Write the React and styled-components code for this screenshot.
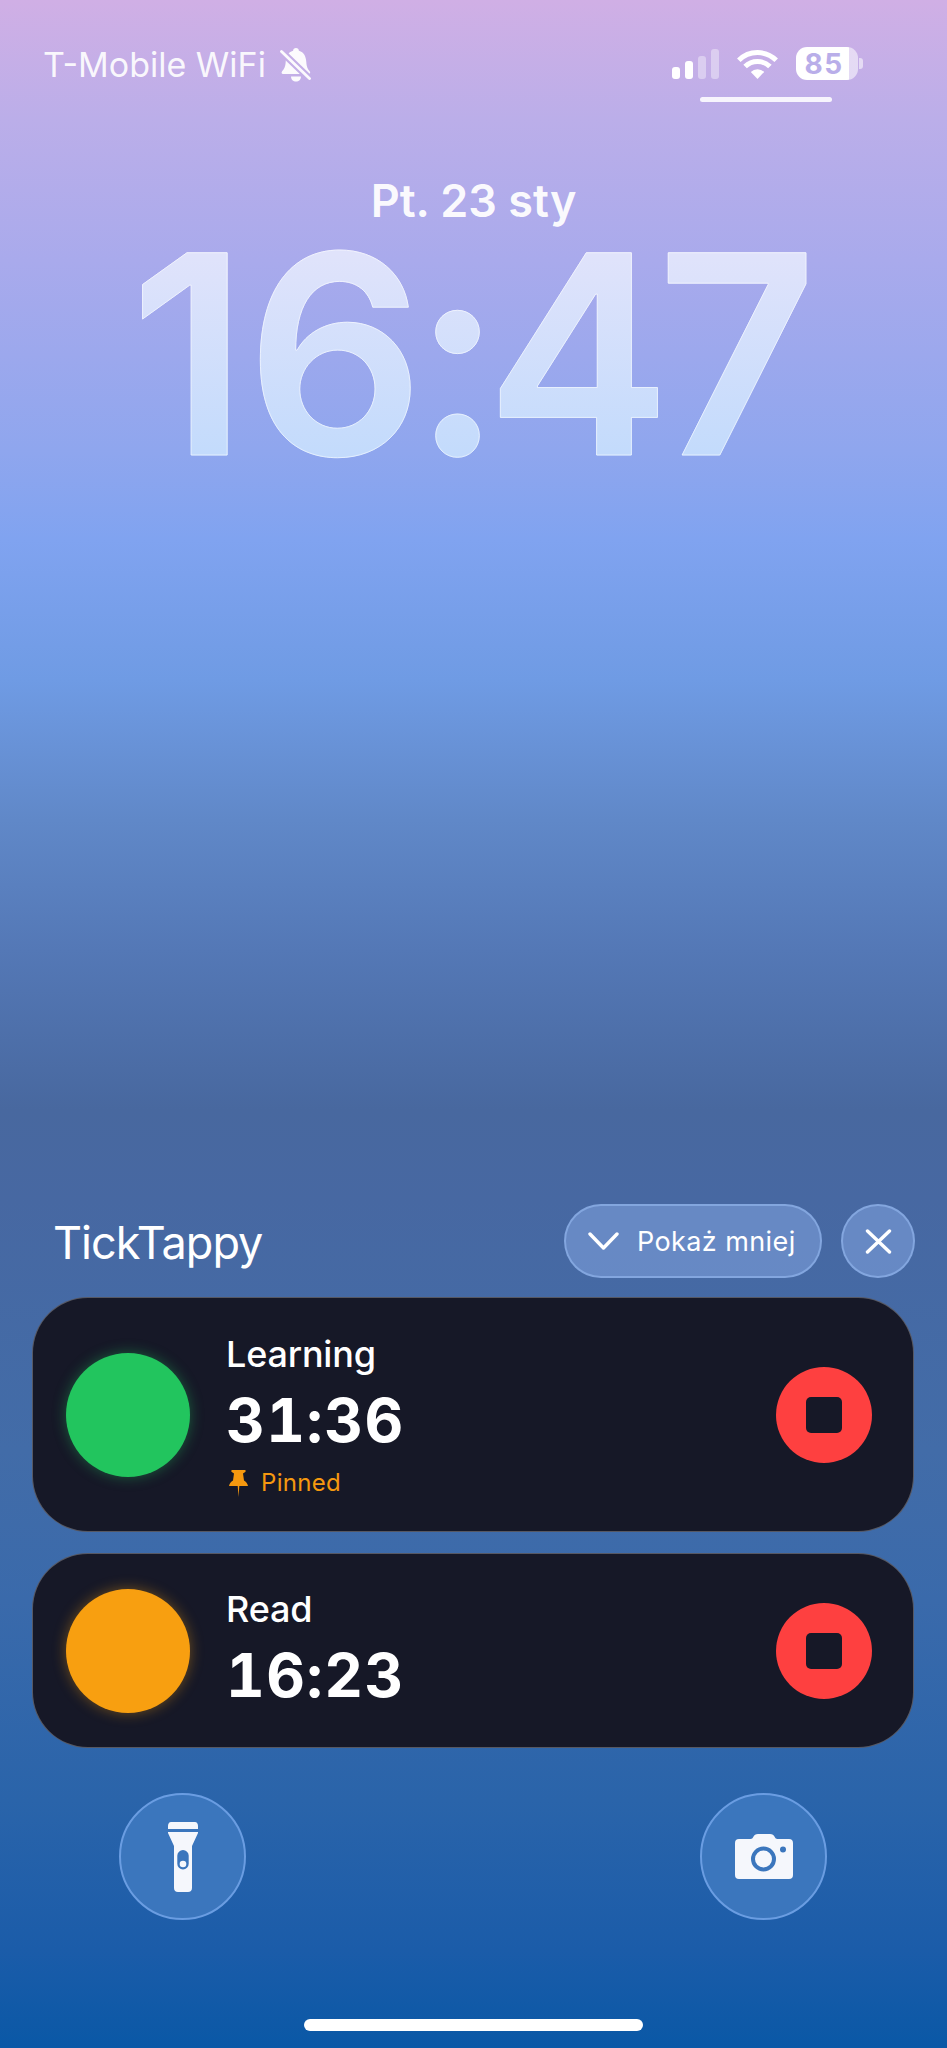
import React from "react";
import styled, { createGlobalStyle } from "styled-components";

const Global = createGlobalStyle`
  html, body { margin: 0; padding: 0; background: #0a58a6; }
  * { box-sizing: border-box; }
`;

const Screen = styled.div`
  width: 947px;
  height: 2048px;
  overflow: hidden;
  display: flex;
  flex-direction: column;
  font-family: Inter, "Liberation Sans", sans-serif;
  color: #fff;
  background: linear-gradient(180deg,
    #d0afe5 0, #bbaee9 120px, #a9aaec 260px, #8fa6ee 450px, #80a3f0 540px,
    #6f9be4 680px, #6088c8 820px, #5478b6 950px, #48689f 1110px, #4768a2 1200px,
    #426ca8 1450px, #3a6aab 1600px, #2a64aa 1800px, #1b5ca9 1950px, #0a58a6 2048px);
`;

const StatusBar = styled.header`
  display: flex;
  justify-content: space-between;
  align-items: flex-start;
  padding: 47px 84px 0 43px;
  height: 102px;
`;
const Carrier = styled.div`
  display: flex;
  align-items: center;
  gap: 14px;
  height: 36px;
  font-size: 34px;
  line-height: 36px;
  color: rgba(255,255,255,.92);
`;
const StatusRight = styled.div`
  display: flex;
  flex-direction: column;
  align-items: flex-end;
  gap: 17px;
`;
const StatusIcons = styled.div`
  display: flex;
  align-items: flex-end;
  gap: 18px;
`;
const Signal = styled.div`
  display: flex;
  align-items: flex-end;
  gap: 5px;
  margin-bottom: 1px;
`;
const Bar = styled.span`
  width: 8px;
  height: ${p => p.$h}px;
  border-radius: 3px;
  background: ${p => p.$on ? "#fff" : "rgba(255,255,255,.38)"};
`;
const Battery = styled.div`
  display: flex;
  align-items: center;
  gap: 1px;
`;
const BatteryBody = styled.div`
  width: 62px;
  height: 33px;
  border-radius: 11px;
  display: flex;
  align-items: center;
  justify-content: center;
  font-size: 28px;
  font-weight: 700;
  letter-spacing: 1.5px;
  padding-right: 6px;
  color: #b9aee9;
  background: linear-gradient(90deg, #fff 0 53px, rgba(255,255,255,.55) 53px);
`;
const BatteryNub = styled.span`
  width: 4px;
  height: 11px;
  border-radius: 0 3px 3px 0;
  background: rgba(255,255,255,.55);
`;
const Underline = styled.div`
  width: 132px;
  height: 5px;
  margin-right: 31px;
  border-radius: 3px;
  background: rgba(255,255,255,.88);
`;

const DateLine = styled.div`
  margin-top: 73px;
  text-align: center;
  font-size: 45px;
  line-height: 52px;
  font-weight: 600;
  color: rgba(255,255,255,.95);
`;
const Clock = styled.div`
  margin-top: 2px;
  height: 250px;
  text-align: center;
  font-size: 278px;
  line-height: 250px;
  font-weight: 600;
  white-space: nowrap;
  color: transparent;
  background: linear-gradient(180deg, #e0e3fb 25px, #c3dbfc 225px);
  -webkit-background-clip: text;
  background-clip: text;
  -webkit-text-stroke: 1px rgba(255,255,255,.55);
`;
const Glyph = styled.span`
  letter-spacing: ${p => p.$ls}px;
`;

const Spacer = styled.div`
  flex: 1;
`;

const Widgets = styled.section`
  padding: 0 33px 0 32px;
  display: flex;
  flex-direction: column;
`;
const WidgetHead = styled.div`
  display: flex;
  align-items: center;
  justify-content: space-between;
  padding: 0 0 0 21px;
  height: 74px;
  margin-bottom: 19px;
`;
const AppName = styled.div`
  font-size: 45px;
  letter-spacing: -1px;
  line-height: 74px;
  padding-top: 3px;
`;
const HeadActions = styled.div`
  display: flex;
  gap: 19px;
  margin-right: -1px;
`;
const Pill = styled.div`
  width: 258px;
  height: 74px;
  border-radius: 37px;
  display: flex;
  align-items: center;
  gap: 18px;
  padding-left: 22px;
  font-size: 27px;
  letter-spacing: .4px;
  background: rgba(135,170,230,.5);
  border: 2px solid rgba(150,185,240,.6);
`;
const CloseBtn = styled.div`
  width: 74px;
  height: 74px;
  border-radius: 50%;
  display: flex;
  align-items: center;
  justify-content: center;
  background: rgba(135,170,230,.5);
  border: 2px solid rgba(150,185,240,.6);
`;
const Card = styled.article`
  height: ${p => p.$h}px;
  margin-bottom: ${p => p.$mb}px;
  background: #161827;
  border-radius: 56px;
  border: 1.5px solid rgba(255,255,255,.28);
  display: flex;
  align-items: center;
  padding: 0 41px 0 33px;
`;
const Dot = styled.div`
  width: 124px;
  height: 124px;
  border-radius: 50%;
  flex: none;
  background: ${p => p.$c};
  box-shadow: 0 0 14px ${p => p.$c}66;
`;
const Info = styled.div`
  margin-left: 36px;
  flex: 1;
  display: flex;
  flex-direction: column;
  padding-top: 2px;
  padding-bottom: ${p => p.$pb || 0}px;
`;
const TaskName = styled.div`
  font-size: 36px;
  line-height: 42px;
  font-weight: 500;
  letter-spacing: -.2px;
`;
const Timer = styled.div`
  margin-top: 13px;
  font-size: 60px;
  line-height: 64px;
  font-weight: 700;
  letter-spacing: 1.5px;
  font-variant-numeric: tabular-nums;
`;
const PinRow = styled.div`
  display: flex;
  align-items: center;
  gap: 13px;
  margin-top: 16px;
  padding-left: 3px;
  font-size: 24px;
  line-height: 30px;
  color: #f5980f;
  letter-spacing: .3px;
`;
const StopBtn = styled.div`
  width: 96px;
  height: 96px;
  border-radius: 50%;
  background: #fe4040;
  display: flex;
  align-items: center;
  justify-content: center;
  flex: none;
`;
const StopSquare = styled.span`
  width: 36px;
  height: 36px;
  border-radius: 5px;
  background: #161827;
`;

const Actions = styled.div`
  display: flex;
  justify-content: space-between;
  padding: 45px 120px 0 119px;
`;
const RoundAction = styled.div`
  width: 127px;
  height: 127px;
  border-radius: 50%;
  display: flex;
  align-items: center;
  justify-content: center;
  background: #3b76bd;
  border: 2px solid #6a9de2;
`;
const HomeBar = styled.div`
  width: 339px;
  height: 12px;
  margin: 99px auto 17px;
  border-radius: 6px;
  background: #fff;
`;

const BellSlash = () => (
  <svg width="32" height="35" viewBox="0 0 32 35" fill="#fff" opacity=".95">
    <mask id="bell-gap" maskUnits="userSpaceOnUse" x="0" y="0" width="32" height="35">
      <rect width="32" height="35" fill="#fff" />
      <path d="M0.500 2.500 30 31" stroke="#000" strokeWidth="7" />
    </mask>
    <g mask="url(#bell-gap)">
      <path d="M16 0c1.700 0 2.800 1.100 2.900 2.700C24 4 26 8.500 26.300 14c.3 5 1.500 7 3.500 9.500.8 1 .3 2.500-1 2.500H3c-1.300 0-1.800-1.500-1-2.500C4 21 5.400 19 5.700 14 6 8.500 8 4 13.100 2.700 13.200 1.100 14.300 0 16 0z" />
      <path d="M11 28.500h10c0 3-2.200 5-5 5s-5-2-5-5z" />
    </g>
    <path d="M1.500 3.500 29.500 30.500" stroke="#fff" strokeWidth="2.800" strokeLinecap="round" />
  </svg>
);
const Wifi = () => (
  <svg width="41" height="31" viewBox="0 0 41 31">
    <path d="M20.500 30 13.800 22.900a9.500 9.500 0 0 1 13.400 0z" fill="#fff" />
    <path d="M8.100 17.600a17.500 17.500 0 0 1 24.800 0M1.800 11.300a26.500 26.500 0 0 1 37.400 0" fill="none" stroke="#fff" strokeWidth="5" />
  </svg>
);
const Chevron = () => (
  <svg width="31" height="18" viewBox="0 0 31 18" fill="none" stroke="#fff" strokeWidth="3.400" strokeLinecap="round" strokeLinejoin="round">
    <path d="M2 2 15.500 16 29 2" />
  </svg>
);
const Cross = () => (
  <svg width="27" height="25" viewBox="0 0 27 25" fill="none" stroke="#fff" strokeWidth="3.400" strokeLinecap="round">
    <path d="M2.500 2 24.500 23M24.500 2 2.500 23" />
  </svg>
);
const Pin = () => (
  <svg width="19" height="27" viewBox="0 0 19 27" fill="#f5980f">
    <path d="M3 0h13c.8 0 1 1.700.2 2L14 3.500l1 7c2 1 3.500 3 4 5.500H10.300L9.500 27 8.700 16H0c.5-2.500 2-4.500 4-5.500l1-7L2.800 2C2 1.700 2.200 0 3 0z" />
  </svg>
);
const Flashlight = () => (
  <svg width="30" height="70" viewBox="0 0 30 70">
    <path d="M3 0h24c2 0 3 2 3 4v3H0V4c0-2 1-4 3-4z" fill="#f5f7fc" />
    <path fillRule="evenodd" fill="#f5f7fc" d="M0 10h30v1L24 24v42c0 2.500-1.500 4-4 4H10c-2.500 0-4-1.500-4-4V24L0 11z M15 28a5.700 5.700 0 0 0-5.700 5.700v8a5.700 5.700 0 0 0 11.400 0v-8A5.700 5.700 0 0 0 15 28z" />
    <circle cx="15" cy="42" r="3.300" fill="#f5f7fc" />
  </svg>
);
const Camera = () => (
  <svg width="58" height="45" viewBox="0 0 58 45">
    <path fillRule="evenodd" fill="#f5f7fc" d="M4 5h11.500c1.500 0 2-.6 2.600-1.700C19.300 1 20.500 0 23 0h12c2.500 0 3.700 1 4.900 3.300C40.500 4.400 41 5 42.500 5H54c2.700 0 4 1.300 4 4v32c0 2.700-1.300 4-4 4H4c-2.700 0-4-1.300-4-4V9c0-2.700 1.300-4 4-4z
      M28.500 12.500a12.500 12.500 0 1 0 0 25a12.500 12.500 0 1 0 0-25z
      M28.500 16.500a8.500 8.500 0 1 1 0 17a8.500 8.500 0 1 1 0-17z
      M48 12.500a3 3 0 1 0 0 6a3 3 0 1 0 0-6z" />
  </svg>
);

const StopButton = () => (
  <StopBtn><StopSquare /></StopBtn>
);

export default function App() {
  return (
    <Screen>
      <Global />
      <StatusBar>
        <Carrier>T-Mobile WiFi <BellSlash /></Carrier>
        <StatusRight>
          <StatusIcons>
            <Signal>
              <Bar $h={12} $on />
              <Bar $h={18} $on />
              <Bar $h={23} />
              <Bar $h={30} />
            </Signal>
            <Wifi />
            <Battery>
              <BatteryBody>85</BatteryBody>
              <BatteryNub />
            </Battery>
          </StatusIcons>
          <Underline />
        </StatusRight>
      </StatusBar>
      <DateLine>Pt. 23 sty</DateLine>
      <Clock>
        <Glyph $ls={-1}>1</Glyph>
        <Glyph $ls={-11}>6</Glyph>
        <Glyph $ls={-16}>:</Glyph>
        <Glyph $ls={-14}>4</Glyph>
        <Glyph $ls={0}>7</Glyph>
      </Clock>
      <Spacer />
      <Widgets>
        <WidgetHead>
          <AppName>TickTappy</AppName>
          <HeadActions>
            <Pill><Chevron />Pokaż mniej</Pill>
            <CloseBtn><Cross /></CloseBtn>
          </HeadActions>
        </WidgetHead>
        <Card $h={235} $mb={21}>
          <Dot $c="#22c55e" />
          <Info>
            <TaskName>Learning</TaskName>
            <Timer>31:36</Timer>
            <PinRow><Pin />Pinned</PinRow>
          </Info>
          <StopButton />
        </Card>
        <Card $h={195} $mb={0}>
          <Dot $c="#f89f10" />
          <Info $pb={8}>
            <TaskName>Read</TaskName>
            <Timer>16:23</Timer>
          </Info>
          <StopButton />
        </Card>
      </Widgets>
      <Actions>
        <RoundAction><Flashlight /></RoundAction>
        <RoundAction><Camera /></RoundAction>
      </Actions>
      <HomeBar />
    </Screen>
  );
}
